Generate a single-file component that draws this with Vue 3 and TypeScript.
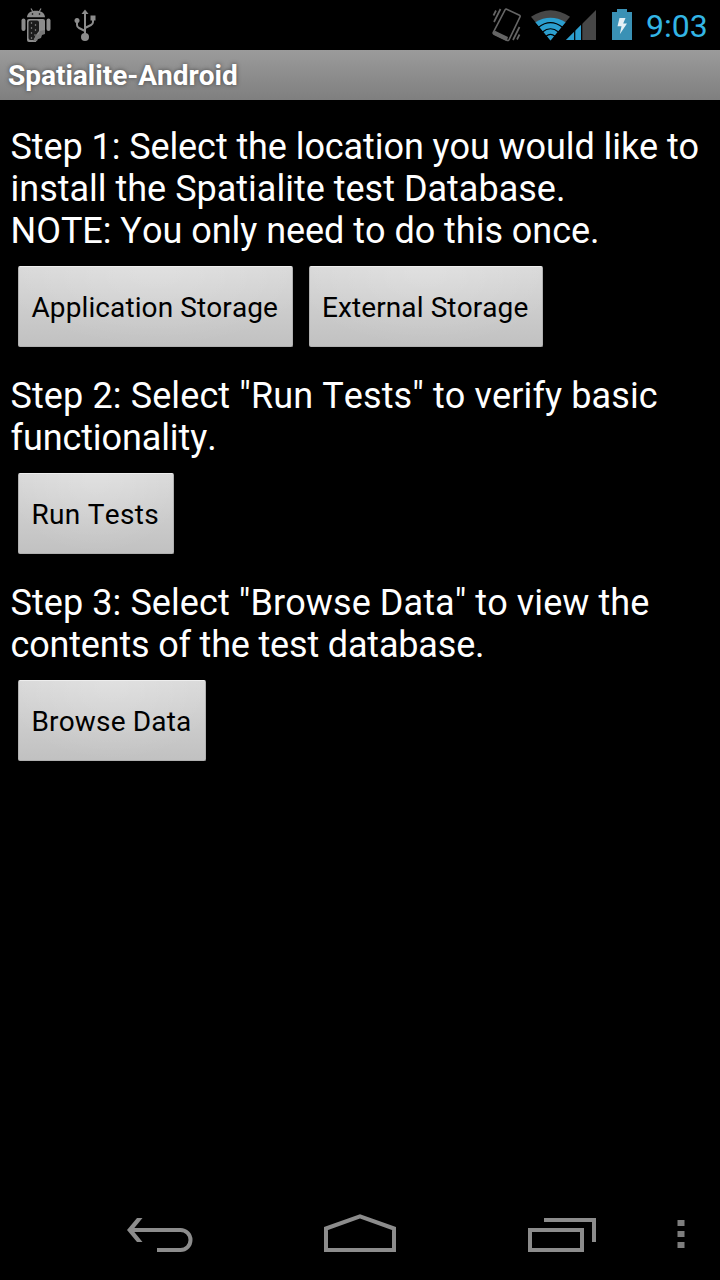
<script setup lang="ts">
interface Line {
  text: string
  tracking: number
}

interface Step {
  lines: Line[]
  buttons: { label: string; size: string }[]
}

const steps: Step[] = [
  {
    lines: [
      { text: 'Step 1: Select the location you would like to', tracking: -0.08 },
      { text: 'install the Spatialite test Database.', tracking: 0 },
      { text: 'NOTE: You only need to do this once.', tracking: -0.03 },
    ],
    buttons: [
      { label: 'Application Storage', size: 'app' },
      { label: 'External Storage', size: 'external' },
    ],
  },
  {
    lines: [
      { text: 'Step 2: Select "Run Tests" to verify basic', tracking: 0.11 },
      { text: 'functionality.', tracking: -0.1 },
    ],
    buttons: [{ label: 'Run Tests', size: 'run' }],
  },
  {
    lines: [
      { text: 'Step 3: Select "Browse Data" to view the', tracking: 0.08 },
      { text: 'contents of the test database.', tracking: -0.18 },
    ],
    buttons: [{ label: 'Browse Data', size: 'browse' }],
  },
]

const perforations = [
  [31.5, 23], [35.5, 25], [31.5, 28], [35.5, 30], [31.5, 33], [35, 35], [31.5, 38],
]
</script>

<template>
  <div class="screen">
    <header class="status">
      <svg class="status-left" width="120" height="50" viewBox="0 0 120 50" aria-hidden="true">
        <g fill="#8c8c8c">
          <path d="M27 17.300C27 13.500 30.500 10.800 36 10.800s9 2.700 9 6.500z" />
          <path d="M31 8.500l2 3.500M41 8.500l-2 3.500" stroke="#8c8c8c" stroke-width="1.200" />
          <rect x="21.500" y="18.500" width="4" height="12.500" rx="2" />
          <rect x="46.500" y="18.500" width="4" height="12.500" rx="2" />
          <path d="M29 19h14q2 0 2 2v11l-4 2-1 4-3 1-1 3h-7q-2 0-2-2V21q0-2 2-2z" />
        </g>
        <circle cx="32.500" cy="14" r=".8" />
        <circle cx="39.500" cy="14" r=".8" />
        <path d="M30.500 20.500H37q2 0 2 2V31l-3 4-2 5h-3.500q-2 0-2-2V22.500q0-2 2-2z" fill="#1c1c1c" />
        <circle v-for="(p, i) in perforations" :key="i" :cx="p[0]" :cy="p[1]" r=".75" fill="#999" />
        <path d="M33 41l3-6 3-1 1-3 5-1v4l-3 1-1 3-3 1-1 2z" fill="#777" />
        <g stroke="#8c8c8c" stroke-width="2" fill="none">
          <path d="M85 12v24M77 22v3q0 2 2 3l6 3M93 17v5q0 2-2 3l-6 3" />
        </g>
        <g fill="#8c8c8c">
          <path d="M81.500 14L85 9.500l3.500 4.500z" />
          <circle cx="85" cy="37" r="4" />
          <circle cx="77" cy="20.500" r="2.500" />
          <rect x="90.500" y="15.500" width="5" height="5" />
        </g>
      </svg>
      <div class="status-right">
        <svg width="160" height="50" viewBox="480 0 160 50" aria-hidden="true">
          <g fill="none" stroke="#656565">
            <path d="M505.200 9.700q.6-1 1.600-.4l12.700 6q1 .6.5 1.600l-11 23q-.7 1-1.700.5l-13.500-6.500q-1-.6-.5-1.600z" stroke-width="1.600" />
            <path d="M494.500 30.500l13.500 6.500-1.300 4.200-13.500-6.500z" fill="#656565" stroke="none" />
            <path d="M500.500 9l-6.500 13M496 10.500l-2.500 5M519.500 27l-6.500 13M519.500 34.500l-2.500 5" stroke-width="1.700" />
          </g>
          <path d="M550.500 40.500L531 16.800Q550.500 3.500 570 16.800z" fill="#474747" />
          <path d="M550.500 40.500L535.400 22.200Q550.500 13.300 565.600 22.200z" fill="#2b9fd0" />
          <g fill="none" stroke="#000" stroke-width="1.200">
            <path d="M538.500 27.200Q550.500 18 562.500 27.200M542.500 32Q550.500 25.500 558.500 32M546 36.200Q550.500 32.500 555 36.200" />
          </g>
          <path d="M566 40L596 10V40z" fill="#474747" />
          <path d="M566 40L581 25V40z" fill="#2b9fd0" />
          <path d="M574.700 29.500V40M581.700 22V40" stroke="#000" stroke-width="1.200" />
          <path d="M612 12h5V9h10v3h5v28h-20z" fill="#3a91b5" />
          <path d="M619.500 18h6l-2.300 5.500h3.800l-7.200 10.700 1.700-8h-4z" fill="#e4f0f5" />
        </svg>
        <time class="clock">9:03</time>
      </div>
    </header>

    <h1 class="title"><span>Spatialite-Android</span></h1>

    <main class="content">
      <section v-for="(step, s) in steps" :key="s" class="step">
        <p class="description">
          <span
            v-for="line in step.lines"
            :key="line.text"
            class="line"
            :style="{ letterSpacing: line.tracking + 'px' }"
          >{{ line.text }}</span>
        </p>
        <div class="actions">
          <button v-for="b in step.buttons" :key="b.label" type="button" class="btn" :class="b.size">
            {{ b.label }}
          </button>
        </div>
      </section>
    </main>

    <nav class="navbar">
      <svg width="720" height="96" viewBox="0 1184 720 96" fill="none" stroke="#8c8c8c" stroke-width="4" aria-hidden="true">
        <path d="M130 1230H180.500a10 10 0 0 1 0 20H157" />
        <path d="M137 1218h5.500L132.700 1230 142.500 1242H137L127 1230z" fill="#8c8c8c" stroke="none" />
        <path d="M326 1250V1228.500L360 1216.300 394 1228.500V1250z" />
        <path d="M530 1230h52v20h-52zM544 1220h50v22" />
        <path d="M677.500 1220h7v6h-7zM677.500 1231h7v6h-7zM677.500 1242h7v6h-7z" fill="#7e7e7e" stroke="none" />
      </svg>
    </nav>
  </div>
</template>

<style>
body {
  margin: 0;
  background: #000;
}
</style>

<style scoped>
.screen {
  display: flex;
  flex-direction: column;
  width: 720px;
  height: 1280px;
  overflow: hidden;
  background: #000;
  font-family: Roboto, "Liberation Sans", sans-serif;
  font-kerning: none;
}
.status {
  display: flex;
  justify-content: space-between;
  height: 50px;
}
.status-right {
  display: flex;
  width: 240px;
}
svg {
  display: block;
  flex: none;
}
.clock {
  margin-left: 6px;
  color: #33b5e5;
  font-size: 32px;
  line-height: 52px;
  white-space: nowrap;
}
.title {
  box-sizing: border-box;
  height: 50px;
  margin: 0;
  padding-left: 8px;
  background: linear-gradient(#9b9b9b, #7f7f7f);
  color: #fff;
  font-size: 28px;
  font-weight: 700;
  line-height: 51px;
  text-shadow: 0 0 4px #444;
  white-space: nowrap;
}
.content {
  flex: 1;
  padding: 26px 10px 0;
}
.step {
  margin-bottom: 28px;
}
.description {
  margin: 0;
  padding-left: 0.5px;
  color: #fff;
  font-size: 36px;
  line-height: 42px;
}
.line {
  display: block;
  white-space: nowrap;
}
.actions {
  display: flex;
  gap: 16px;
  padding: 14px 8px 0;
}
.btn {
  box-sizing: border-box;
  height: 81px;
  padding: 2px 0 0 12.5px;
  border: 1px solid #b0b0b0;
  border-top-color: #eee;
  border-radius: 2px;
  background: radial-gradient(ellipse 60% 100% at 50% 0, rgb(255 255 255 / 20%), transparent), linear-gradient(#d9d9d9, #c1c1c1);
  color: #000;
  font: 28px/77px Roboto, "Liberation Sans", sans-serif;
  font-kerning: none;
  letter-spacing: 0.1px;
  text-align: left;
  white-space: nowrap;
}
.app { width: 275px; }
.external { width: 234px; padding-left: 12px; }
.run { width: 156px; letter-spacing: 0.3px; }
.browse { width: 188px; letter-spacing: 0.15px; }
.navbar {
  height: 96px;
}
</style>
